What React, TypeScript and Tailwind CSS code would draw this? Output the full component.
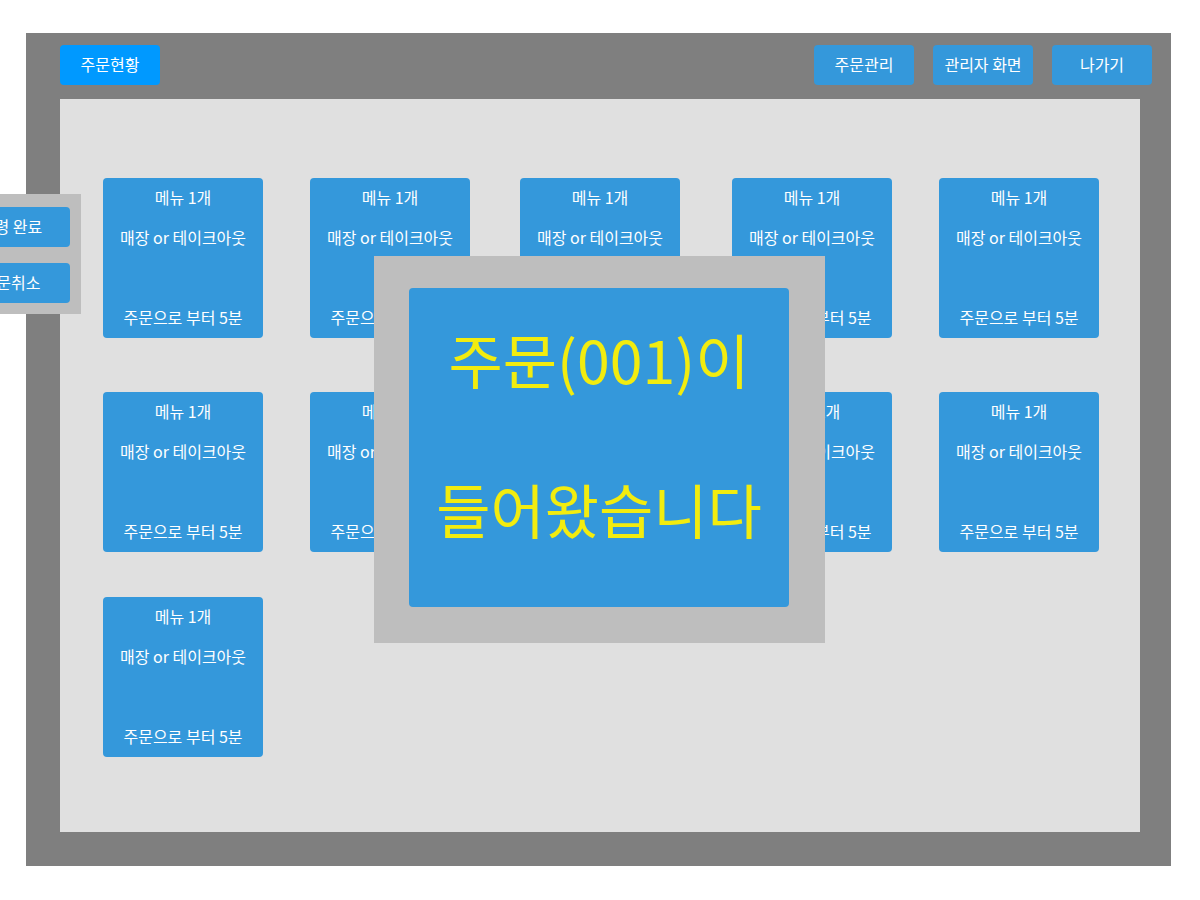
const cardsPerBoard = 11;
const orders = Array.from({ length: cardsPerBoard }, (_, i) => i + 1);

const navItems = ['주문관리', '관리자 화면', '나가기'];

function OrderCard() {
  return (
    <li className="flex h-40 w-40 flex-col gap-0.5 rounded bg-[#3498db] text-center text-base leading-[38px] whitespace-nowrap text-white">
      <p>메뉴 1개</p>
      <p>매장 or 테이크아웃</p>
      <p className="pt-10">주문으로 부터 5분</p>
    </li>
  );
}

export default function App() {
  return (
    <div className="relative min-h-screen overflow-hidden bg-white pt-[33px] pr-[29px] pb-[34px] pl-[26px] font-['Noto_Sans_CJK_KR',sans-serif]">
      <div className="bg-[#7f7f7f] pb-[34px]">
        <header className="flex items-center justify-between pt-3 pr-[19px] pb-3.5 pl-[34px]">
          <button type="button" className="h-10 w-[100px] rounded bg-[#0099ff] pb-0.5 text-base text-white">
            주문현황
          </button>
          <nav className="flex gap-[19px]">
            {navItems.map((label) => (
              <button key={label} type="button" className="h-10 w-[100px] rounded bg-[#3498db] pb-0.5 text-base whitespace-nowrap text-white">
                {label}
              </button>
            ))}
          </nav>
        </header>
        <main className="mr-[31px] ml-[34px] bg-[#e0e0e0] pt-[79px] pr-[41px] pb-[75px] pl-[43px]">
          <ul className="grid grid-cols-[207fr_210fr_212fr_207fr_160fr] grid-rows-[214px_205px_160px]">
            {orders.map((id) => (
              <OrderCard key={id} />
            ))}
          </ul>
        </main>
      </div>

      <div className="absolute top-[194px] -left-[59px] flex flex-col gap-4 bg-[#bebebe] px-[11px] pt-[13px] pb-[11px]">
        <button type="button" className="h-10 w-[118px] rounded bg-[#3498db] pb-0.5 text-base text-white">
          수령 완료
        </button>
        <button type="button" className="h-10 w-[118px] rounded bg-[#3498db] pb-0.5 text-base text-white">
          주문취소
        </button>
      </div>

      <div className="absolute inset-0 flex items-start justify-center pt-64 pr-px">
        <div role="dialog" aria-labelledby="order-notice" className="bg-[#bebebe] pt-8 pr-9 pb-9 pl-[35px]">
          <p
            id="order-notice"
            className="flex h-[319px] w-[380px] flex-col gap-2 rounded bg-[#3498db] text-center text-[59px] leading-[142px] whitespace-nowrap text-[#f2ec0f]"
          >
            <span>주문(001)이</span>
            <span>들어왔습니다</span>
          </p>
        </div>
      </div>
    </div>
  );
}
